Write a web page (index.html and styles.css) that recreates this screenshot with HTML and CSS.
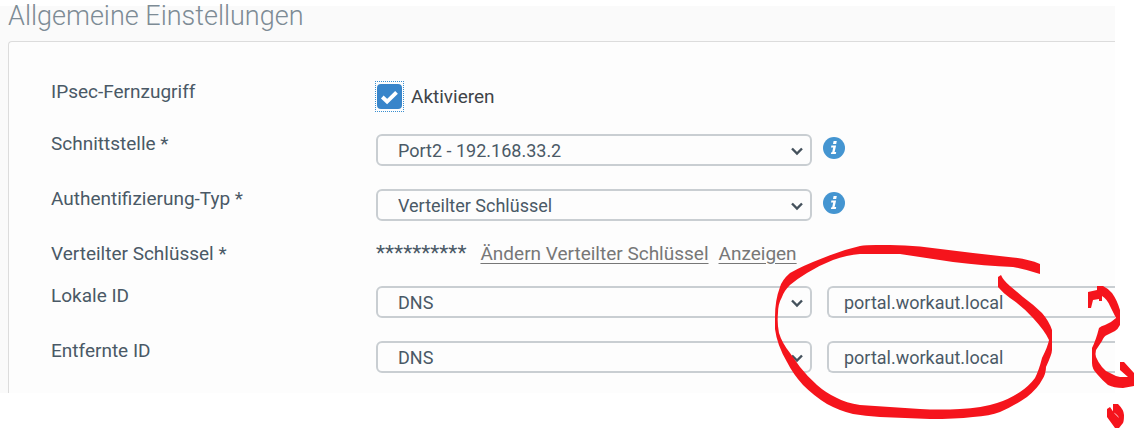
FILE: index.html
```html
<!DOCTYPE html>
<html lang="de">
<head>
  <meta charset="UTF-8" />
  <meta name="viewport" content="width=device-width, initial-scale=1" />
  <title>Allgemeine Einstellungen</title>
  <link rel="stylesheet" href="styles.css">
</head>
<body>
  <main class="page">
    <h1 class="page-title">Allgemeine Einstellungen</h1>

    <form class="panel">
      <div class="row">
        <span class="label">IPsec-Fernzugriff</span>
        <label class="check">
          <span class="check-box">
            <input type="checkbox" checked>
            <svg viewBox="0 0 26 26"><path d="M5.5 13.5l5 4.7 9.8-9.6" /></svg>
          </span>
          Aktivieren
        </label>
      </div>

      <div class="row">
        <label class="label" for="interface">Schnittstelle *</label>
        <div class="select">
          <select id="interface"><option>Port2 - 192.168.33.2</option></select>
          <svg viewBox="0 0 14 10"><path d="M2 2.5l5 5 5-5" /></svg>
        </div>
        <button class="info" type="button" aria-label="Info">
          <svg viewBox="0 0 22 22"><circle cx="11" cy="11" r="11" /><path d="M10.6 4h3.2l-.6 3H10zM8.4 8.6h4.7l-1.5 6.5h1.6l-.4 1.9H7.9l.4-1.8h.9l1-4.8H8z" /></svg>
        </button>
      </div>

      <div class="row">
        <label class="label" for="auth-type">Authentifizierung-Typ *</label>
        <div class="select">
          <select id="auth-type"><option>Verteilter Schlüssel</option></select>
          <svg viewBox="0 0 14 10"><path d="M2 2.5l5 5 5-5" /></svg>
        </div>
        <button class="info" type="button" aria-label="Info">
          <svg viewBox="0 0 22 22"><circle cx="11" cy="11" r="11" /><path d="M10.6 4h3.2l-.6 3H10zM8.4 8.6h4.7l-1.5 6.5h1.6l-.4 1.9H7.9l.4-1.8h.9l1-4.8H8z" /></svg>
        </button>
      </div>

      <div class="row">
        <span class="label">Verteilter Schlüssel *</span>
        <div class="secret">
          <span class="stars">**********</span>
          <a href="#">Ändern Verteilter Schlüssel</a>
          <a href="#">Anzeigen</a>
        </div>
      </div>

      <div class="row">
        <label class="label" for="local-type">Lokale ID</label>
        <div class="select">
          <select id="local-type"><option>DNS</option></select>
          <svg viewBox="0 0 14 10"><path d="M2 2.5l5 5 5-5" /></svg>
        </div>
        <input class="field" type="text" value="portal.workaut.local" aria-label="Lokale ID Wert">
      </div>

      <div class="row">
        <label class="label" for="remote-type">Entfernte ID</label>
        <div class="select">
          <select id="remote-type"><option>DNS</option></select>
          <svg viewBox="0 0 14 10"><path d="M2 2.5l5 5 5-5" /></svg>
        </div>
        <input class="field" type="text" value="portal.workaut.local" aria-label="Entfernte ID Wert">
      </div>
    </form>
  </main>

  <!-- red pen marks: circle and question mark -->
  <svg class="marks" viewBox="0 0 1134 428">
    <path d="M1040 264Q1028 259 1013 257.500L973 253 920 246.500Q905 245 890 245H876Q866 245 860 246Q842 250 823 258Q802 266 790 273Q782 280 780 287Q775 300 775 317V329Q777 345 787 362Q793 374 803 385Q814 396 827 404Q840 411 853 414Q865 416 880 417L930 419Q955 419 973 417Q990 416 1000 412Q1014 406 1027 397Q1038 388 1042 380Q1046 374 1046 367Q1052 354 1052 350V330Q1049 321 1042 313Q1034 305 1023 297L1010 286Q1003 280 1001 275L998 277V287Q1003 293 1010 298Q1022 306 1033 318Q1045 331 1049 340Q1048 346 1042 358Q1039 370 1035 378Q1029 386 1020 392Q1008 400 997 403Q982 408 960 409Q940 410 920 409L860 405Q846 403 837 398Q826 393 817 385Q807 376 800 367L790 353Q782 343 779 333Q777 323 778 313Q778 304 782 297Q784 291 790 285Q797 279 807 273Q820 265 833 260Q847 255 860 254H900L953 262Q985 266 1013 267Q1028 270 1040 274z" />
    <path d="M1097 286H1103Q1109 289 1112 293Q1117 300 1120 310V325Q1118 329 1115 331L1107 335Q1104 336 1102 341L1096 350Q1095 354 1096 357Q1098 362 1102 367Q1105 371 1110 373Q1115 376 1120 377H1128L1120 370V362H1124L1134 373V386L1123 388Q1114 388 1108 385Q1102 380 1097 374Q1092 369 1092 363V348Q1096 340 1099 328Q1101 326 1105 325Q1112 322 1116 318L1110 306Q1107 299 1102 296V301H1099V299L1093 300 1091 308H1088V292L1097 290z" />
    <path d="M1107 409L1110 407Q1114 414 1119 418Q1118 415 1113 412V404H1118Q1124 410 1124 415Q1124 421 1123 423L1119 428H1115L1107 417z" />
  </svg>
</body>
</html>
```
FILE: styles.css
```css
* {
  box-sizing: border-box;
}

body {
  margin: 0;
  background-color: #fff;
  color: #4a5966;
  font-family: Roboto, "Liberation Sans", sans-serif;
  font-size: 19px;
  line-height: 19px;
  overflow: hidden;
}

.page {
  margin: 6px 19px 0 0;
  padding-left: 8px;
  background-color: #fafafa;
}

.page-title {
  margin: 0;
  padding-bottom: 14px;
  font-size: 27px;
  font-weight: 300;
  line-height: 21px;
  color: #7d8b95;
}

.panel {
  display: flex;
  flex-direction: column;
  gap: 23px;
  padding: 40px 0 20px 42px;
  border: 1px solid #dcdcdc;
  border-width: 1px 0 0 1px;
  border-radius: 4px 0 0 0;
  background-color: #fdfdfd;
}

/* Form rows */
.row {
  display: flex;
  align-items: flex-start;
}

.label {
  flex: 0 0 325px;
}

.check {
  display: flex;
  align-items: center;
  gap: 8px;
  height: 29px;
  color: #3f4448;
}

.check-box {
  position: relative;
  display: flex;
  width: 27px;
  height: 29px;
  padding: 2px 1px;
  outline: 1px dotted #3a8fd0;
}

.check-box input {
  appearance: none;
  width: 25px;
  height: 25px;
  margin: 0;
  border-radius: 4px;
  background-color: #3885ca;
}

.check-box svg {
  position: absolute;
  top: 2px;
  left: 1px;
  width: 25px;
  height: 25px;
  fill: none;
  stroke: #fff;
  stroke-width: 4;
  pointer-events: none;
}

.select {
  position: relative;
  flex: 0 0 436px;
}

.select select,
.field {
  display: block;
  width: 100%;
  height: 32px;
  padding: 0 20px;
  border: 2px solid #c9ced2;
  border-radius: 6px;
  background-color: #fdfdfd;
  color: #4a5966;
  font-family: inherit;
  font-size: 18px;
}

.select select {
  appearance: none;
}

.select svg {
  position: absolute;
  top: 12px;
  right: 8px;
  width: 14px;
  height: 10px;
  fill: none;
  stroke: #44515c;
  stroke-width: 2.4;
  pointer-events: none;
}

.field {
  flex: 1;
  min-width: 0;
  margin-left: 15px;
  padding: 0 15px;
  border-right: 0;
  border-radius: 6px 0 0 6px;
}

.info {
  width: 22px;
  height: 22px;
  margin: 3px 0 0 11px;
  padding: 0;
  border: 0;
  background: none;
}

.info svg {
  display: block;
}

.info circle {
  fill: #4495d1;
}

.info path {
  fill: #fff;
}

.secret {
  display: flex;
  gap: 10px;
}

.secret a {
  color: #777;
  text-underline-offset: 3px;
}

.stars {
  padding-right: 4px;
  font-size: 21px;
}

.marks {
  position: absolute;
  top: 0;
  left: 0;
  width: 1134px;
  height: 428px;
  fill: #f5141c;
  pointer-events: none;
}
```
